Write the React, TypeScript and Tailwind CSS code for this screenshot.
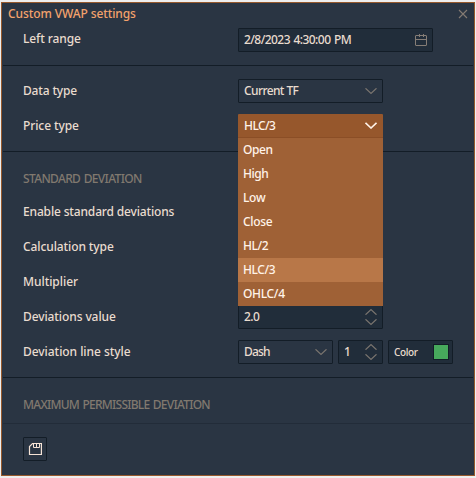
import type { ReactNode } from 'react';

const field = 'flex h-6 shrink-0 items-center rounded-[1px] border border-[#131d27]';

function Chevron({ className = 'text-[#7b756f]', up = false }: { className?: string; up?: boolean }) {
  return (
    <svg width="12" height="6" viewBox="0 0 12 6" fill="none" stroke="currentColor" strokeWidth="1.2" className={className}>
      <path d={up ? 'M0.5 5.7L6 0.6L11.5 5.7' : 'M0.5 0.3L6 5.4L11.5 0.3'} />
    </svg>
  );
}

function Stepper() {
  return (
    <span className="ml-auto mr-[5px] flex flex-col gap-1">
      <Chevron up />
      <Chevron />
    </span>
  );
}

function Row({ label, track, children }: { label: string; track: string; children?: ReactNode }) {
  return (
    <div className="flex h-6 shrink-0 items-center pl-5">
      <span className={`w-[215px] shrink-0 pb-px ${track}`}>{label}</span>
      {children}
    </div>
  );
}

const options = [
  ['Open', 'tracking-[-0.45px]'],
  ['High', 'tracking-[-0.45px]'],
  ['Low', 'tracking-[-0.3px]'],
  ['Close', 'tracking-[-0.3px]'],
  ['HL/2', 'tracking-[-0.4px]'],
  ['HLC/3', 'tracking-[-0.4px]'],
  ['OHLC/4', 'tracking-[-0.33px]'],
];

export default function App() {
  return (
    <div className="h-[478px] w-[476px] overflow-hidden bg-[#eeeeee] pl-px pt-[2px] font-['Noto_Sans','Open_Sans',sans-serif] text-[12px] font-medium leading-4 text-[#e9dccf] whitespace-nowrap">
      <div className="flex h-[474px] w-[474px] flex-col border border-[#96592d] bg-[#2a3543] px-px">
        <header className="flex h-[25px] shrink-0 items-center pb-[3px] pl-[5px] pr-[5px] text-[#f3a26c]">
          <span className="tracking-[-0.1px]">Custom VWAP settings</span>
          <svg width="10" height="10" viewBox="0 0 10 10" fill="none" stroke="#857b73" strokeWidth="1.1" className="ml-auto">
            <path d="M1 1L9 9M9 1L1 9" />
          </svg>
        </header>

        <section className="h-[38px] shrink-0 border-b border-[#131d27]">
          <Row label="Left range" track="-mt-[2px] tracking-[-0.1px]">
            <div className={`${field} w-[195px] bg-[#212d3a] pl-[5px] pr-1`}>
              <span className="tracking-[-0.56px] [word-spacing:1px]">2/8/2023 4:30:00 PM</span>
              <svg width="13" height="12" viewBox="0 0 13 12" fill="none" stroke="#857d76" className="ml-auto">
                <rect x="0.5" y="1.5" width="11" height="10" rx="0.5" />
                <path d="M1 5.5H11M4.5 0V3M8.5 0V3" />
              </svg>
            </div>
          </Row>
        </section>

        <section className="flex h-[86px] shrink-0 flex-col gap-[11px] border-b border-[#131d27] pt-[13px]">
          <Row label="Data type" track="tracking-[-0.16px]">
            <div className={`${field} w-[145px] pl-[5px] pr-[5px]`}>
              <span className="tracking-[-0.6px]">Current TF</span>
              <Chevron className="ml-auto text-[#7b756f]" />
            </div>
          </Row>
          <Row label="Price type" track="tracking-[-0.1px]">
            <div className="relative h-6 w-[145px] text-[#fff3e9]">
              <div className="flex h-6 items-center rounded-t-[1px] border-b border-[#8b4e26] bg-[#96572c] pl-[6px] pr-[6px]">
                <span className="tracking-[-0.6px]">HLC/3</span>
                <svg width="12" height="7" viewBox="0 0 12 7" fill="none" stroke="currentColor" strokeWidth="1.6" className="ml-auto">
                  <path d="M0.5 0.8L6 6L11.5 0.8" />
                </svg>
              </div>
              <div className="absolute left-0 top-6 z-10 w-full bg-[#9f6136]">
                {options.map(([name, track]) => (
                  <div key={name} className={`flex h-6 items-center pl-[5px] ${track} ${name === 'HLC/3' ? 'bg-[#b87748]' : ''}`}>
                    {name}
                  </div>
                ))}
              </div>
            </div>
          </Row>
        </section>

        <section className="flex h-[226px] shrink-0 flex-col border-b border-[#131d27] pt-[19px]">
          <h2 className="mb-[9px] h-4 shrink-0 pl-5 tracking-[-0.65px] [word-spacing:1px] text-[#81796f]">STANDARD DEVIATION</h2>
          <div className="flex flex-col gap-[11px] pt-[4px]">
            <Row label="Enable standard deviations" track="tracking-[-0.155px]" />
            <Row label="Calculation type" track="tracking-[-0.1px]" />
            <Row label="Multiplier" track="tracking-[-0.05px]" />
            <Row label="Deviations value" track="tracking-[-0.1px]">
              <div className={`${field} w-[145px] bg-[#212d3a] pl-[5px]`}>
                <span className="tracking-[-0.6px]">2.0</span>
                <Stepper />
              </div>
            </Row>
            <Row label="Deviation line style" track="tracking-[-0.05px]">
              <div className="flex gap-[5px]">
                <div className={`${field} w-[95px] pl-[5px] pr-[5px]`}>
                  <span className="tracking-[-0.8px]">Dash</span>
                  <Chevron className="ml-auto text-[#7b756f]" />
                </div>
                <div className={`${field} w-[45px] bg-[#212d3a] pl-[5px]`}>
                  <span>1</span>
                  <Stepper />
                </div>
                <div className={`${field} w-[65px] bg-[#212d3a] pl-[5px] pr-[3px]`}>
                  <span className="text-[10px] tracking-[-0.4px]">Color</span>
                  <span className="ml-auto h-4 w-4 border border-[#131d27] bg-[#47a95c]" />
                </div>
              </div>
            </Row>
          </div>
        </section>

        <section className="h-[46px] shrink-0 border-b border-[#222c39] pl-5 pt-[19px]">
          <h2 className="tracking-[-0.75px] [word-spacing:1px] text-[#81796f]">MAXIMUM PERMISSIBLE DEVIATION</h2>
        </section>

        <footer className="flex pl-5 pt-[13px]">
          <div className={`${field} w-6 justify-center`}>
            <svg width="14" height="14" viewBox="0 0 14 14" fill="none" stroke="#f5e3d6">
              <path strokeWidth="1.2" d="M4.5 1.5H13.4V12.5H1.5V4.5L4.5 1.5Z" />
              <path d="M5.5 1.5V5.5H11.5V1.5M8.5 1.5V5.5" />
            </svg>
          </div>
        </footer>
      </div>
    </div>
  );
}
